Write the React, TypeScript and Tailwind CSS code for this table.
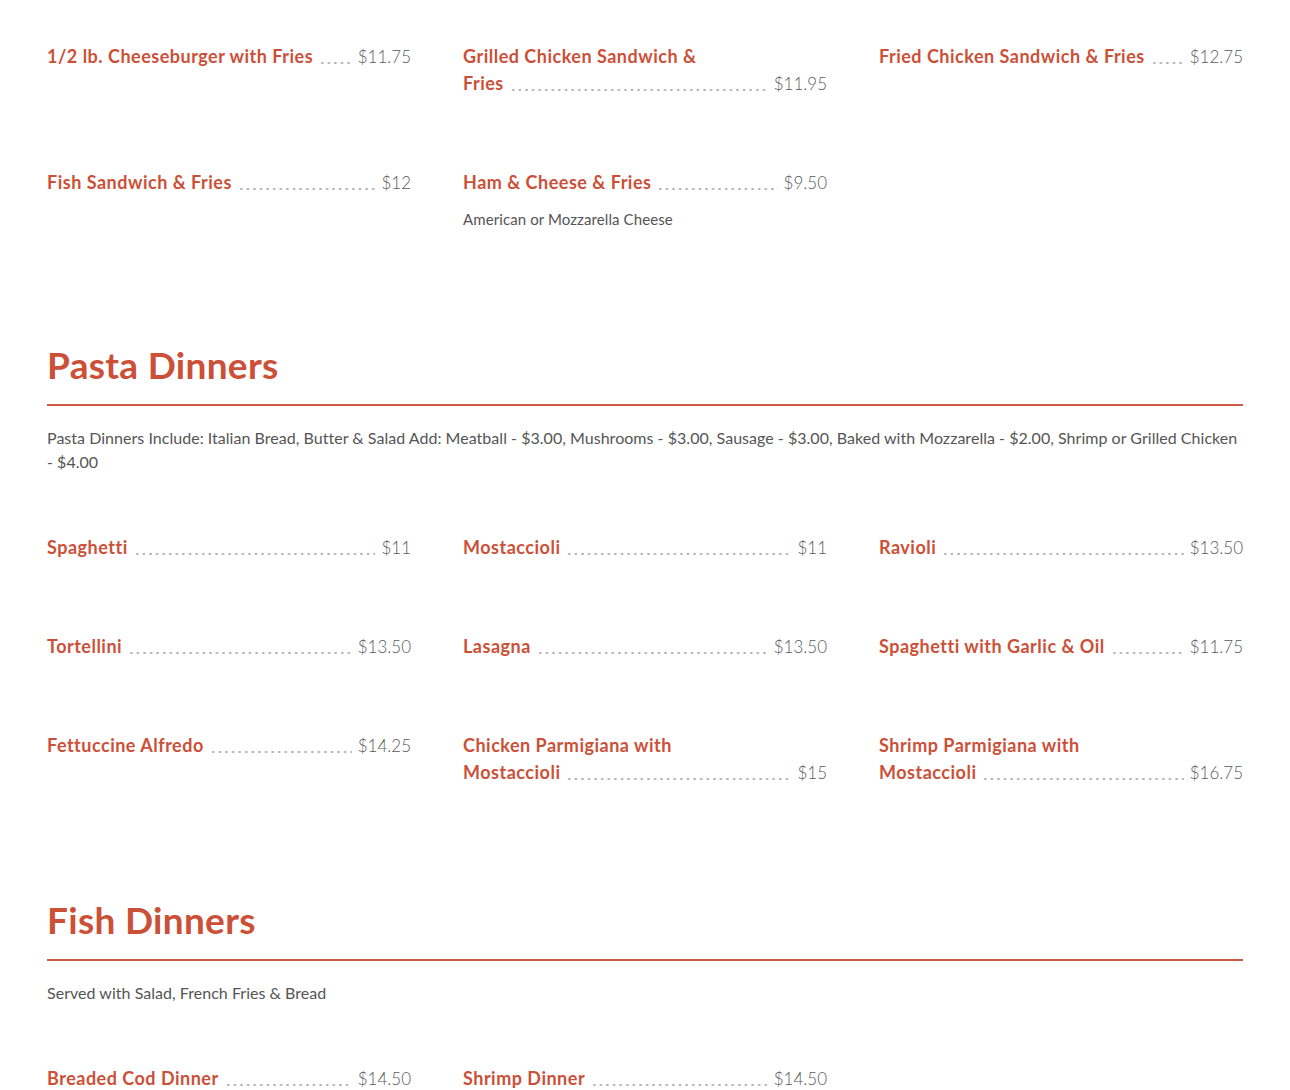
import React from "react";

type Item = {
  name: string;
  line1?: string;
  price: string;
  desc?: string;
};

const sandwiches: Item[] = [
  { name: "1/2 lb. Cheeseburger with Fries", price: "$11.75" },
  { line1: "Grilled Chicken Sandwich &", name: "Fries", price: "$11.95" },
  { name: "Fried Chicken Sandwich & Fries", price: "$12.75" },
  { name: "Fish Sandwich & Fries", price: "$12" },
  { name: "Ham & Cheese & Fries", price: "$9.50", desc: "American or Mozzarella Cheese" },
];

const pasta: Item[] = [
  { name: "Spaghetti", price: "$11" },
  { name: "Mostaccioli", price: "$11" },
  { name: "Ravioli", price: "$13.50" },
  { name: "Tortellini", price: "$13.50" },
  { name: "Lasagna", price: "$13.50" },
  { name: "Spaghetti with Garlic & Oil", price: "$11.75" },
  { name: "Fettuccine Alfredo", price: "$14.25" },
  { line1: "Chicken Parmigiana with", name: "Mostaccioli", price: "$15" },
  { line1: "Shrimp Parmigiana with", name: "Mostaccioli", price: "$16.75" },
];

const fish: Item[] = [
  { name: "Breaded Cod Dinner", price: "$14.50" },
  { name: "Shrimp Dinner", price: "$14.50" },
];

function MenuItem({ item }: { item: Item }) {
  return (
    <div className="min-w-0">
      {item.line1 && (
        <div className="text-[18px] leading-[27px] font-bold tracking-[0.5px] text-[#cc5038]">
          {item.line1}
        </div>
      )}
      <div className="flex items-end">
        <span className="shrink-0 text-[18px] leading-[27px] font-bold tracking-[0.5px] text-[#cc5038] whitespace-nowrap">
          {item.name}
        </span>
        <span className="flex-1 min-w-[20px] mx-[6px] h-[27px] bg-[radial-gradient(circle,#a8a8a8_0.9px,transparent_1.3px)] bg-[length:6.6px_4px] bg-[position:0_18px] bg-repeat-x" />
        <span className="shrink-0 text-[17px] leading-[27px] font-light text-[#5a5a5a] whitespace-nowrap">
          {item.price}
        </span>
      </div>
      {item.desc && (
        <div className="mt-[13px] text-[15px] leading-[20px] tracking-[0.1px] text-[#555555]">
          {item.desc}
        </div>
      )}
    </div>
  );
}

function Grid({ items }: { items: Item[] }) {
  return (
    <div className="grid grid-cols-3 gap-x-[52px] gap-y-[72px]">
      {items.map((it, i) => (
        <MenuItem key={i} item={it} />
      ))}
    </div>
  );
}

function Section({
  title,
  desc,
  items,
  className,
}: {
  title: string;
  desc: string;
  items: Item[];
  className: string;
}) {
  return (
    <div className={className}>
      <h2 className="text-[37px] leading-[48px] font-bold tracking-[0.3px] text-[#cc5038]">{title}</h2>
      <div className="mt-[15px] h-[2px] bg-[#cc5a44]" />
      <p className="mt-[20px] text-[16px] leading-[24px] tracking-[0.03px] text-[#555555]">{desc}</p>
      <div className="mt-[60px]">
        <Grid items={items} />
      </div>
    </div>
  );
}

export default function App() {
  return (
    <div
      className="min-h-[1090px] bg-white px-[47px] pt-[43px] overflow-hidden"
      style={{ fontFamily: "Lato, 'Noto Sans', sans-serif" }}
    >
      <Grid items={sandwiches} />
      <Section
        className="mt-[112px]"
        title="Pasta Dinners"
        desc="Pasta Dinners Include: Italian Bread, Butter & Salad Add: Meatball - $3.00, Mushrooms - $3.00, Sausage - $3.00, Baked with Mozzarella - $2.00, Shrimp or Grilled Chicken - $4.00"
        items={pasta}
      />
      <Section
        className="mt-[110px]"
        title="Fish Dinners"
        desc="Served with Salad, French Fries & Bread"
        items={fish}
      />
    </div>
  );
}
